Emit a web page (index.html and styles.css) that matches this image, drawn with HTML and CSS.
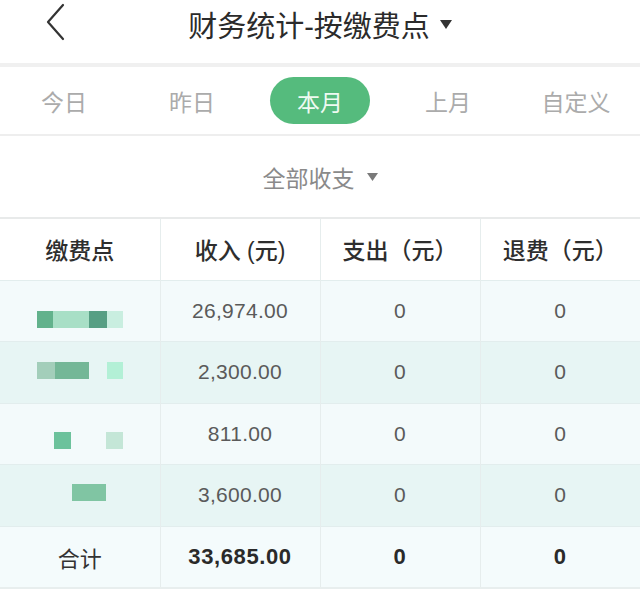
FILE: index.html
```html
<!DOCTYPE html>
<html lang="zh">
<head>
<meta charset="utf-8">
<link rel="stylesheet" href="styles.css">
</head>
<body>
<div class="page">
  <header class="topbar">
    <div class="back">
      <svg width="22" height="38" viewBox="0 0 22 38"><path d="M18 2 L3 19 L18 36" fill="none" stroke="#333" stroke-width="2.2" stroke-linecap="round" stroke-linejoin="round"/></svg>
    </div>
    <h1 class="title">财务统计-按缴费点<svg class="caret" width="12" height="9" viewBox="0 0 12 9"><path d="M0 0 H12 L6 9 Z" fill="#333"/></svg></h1>
    <div></div>
  </header>
  <nav class="tabs">
    <div class="tab">今日</div>
    <div class="tab">昨日</div>
    <div class="tab"><span class="pill">本月</span></div>
    <div class="tab">上月</div>
    <div class="tab">自定义</div>
  </nav>
  <div class="filter">全部收支<svg class="caret small" width="11" height="8" viewBox="0 0 11 8"><path d="M0 0 H11 L5.5 8 Z" fill="#7a7a7a"/></svg></div>
  <table class="grid">
    <thead>
      <tr><th>缴费点</th><th>收入 (元)</th><th>支出（元）</th><th>退费（元）</th></tr>
    </thead>
    <tbody>
      <tr class="light">
        <td class="name"><div class="mosaic r1"><i class="w16 c1"></i><i class="w36 c2"></i><i class="w18 c3"></i><i class="w16 c4"></i></div></td>
        <td>26,974.00</td><td>0</td><td>0</td>
      </tr>
      <tr class="dark">
        <td class="name"><div class="mosaic r2"><i class="w18 c5"></i><i class="w34 c6"></i><i class="w18"></i><i class="w16 c7"></i></div></td>
        <td>2,300.00</td><td>0</td><td>0</td>
      </tr>
      <tr class="light">
        <td class="name"><div class="mosaic r3"><i class="w17"></i><i class="w17 c8"></i><i class="w35"></i><i class="w17 c9"></i></div></td>
        <td>811.00</td><td>0</td><td>0</td>
      </tr>
      <tr class="dark">
        <td class="name"><div class="mosaic r4"><i class="w35"></i><i class="w34 c10"></i></div></td>
        <td>3,600.00</td><td>0</td><td>0</td>
      </tr>
      <tr class="total">
        <td class="label">合计</td><td>33,685.00</td><td>0</td><td>0</td>
      </tr>
    </tbody>
  </table>
</div>
</body>
</html>
```

FILE: styles.css
```css
* { box-sizing: border-box; }
html, body { margin: 0; padding: 0; background: #fff; }
body {
  font-family: "Liberation Sans", "Noto Sans CJK SC", sans-serif;
  color: #333;
}
.page { width: 640px; }

.topbar {
  height: 63px;
  display: grid;
  grid-template-columns: 1fr auto 1fr;
  align-items: center;
}
.back { padding-left: 45px; display: flex; align-items: center; height: 63px; }
.back svg { display: block; margin-top: -20px; }
.title {
  margin: 0;
  font-size: 29px;
  font-weight: 400;
  color: #2b2b2b;
  display: flex;
  align-items: center;
  margin-top: -15px;
}
.caret { display: block; margin-left: 10px; }
.caret.small { margin-left: 12px; }

.tabs {
  height: 73px;
  border-top: 4px solid #f0f0f0;
  border-bottom: 2px solid #eeeeee;
  display: grid;
  grid-template-columns: repeat(5, 1fr);
  align-items: center;
}
.tab {
  text-align: center;
  font-size: 23px;
  color: #ababab;
  display: flex;
  justify-content: center;
  align-items: center;
}
.pill {
  width: 100px;
  height: 47px;
  border-radius: 24px;
  background: #55bb7d;
  color: #eefaf2;
  display: flex;
  align-items: center;
  justify-content: center;
}

.filter {
  height: 81px;
  display: flex;
  align-items: center;
  justify-content: center;
  font-size: 23px;
  color: #8a8a8a;
}

.grid {
  width: 640px;
  border-collapse: collapse;
  table-layout: fixed;
  border-top: 2px solid #e8eaea;
  border-bottom: 2px solid #e8eeee;
}
.grid th, .grid td {
  width: 160px;
  text-align: center;
  border-left: 1px solid #e6eded;
  padding: 0;
}
.grid th:first-child, .grid td:first-child { border-left: none; }
.grid th {
  height: 62px;
  font-size: 23px;
  font-weight: 500;
  color: #2e2e2e;
  background: #fff;
}
.grid td {
  height: 61.5px;
  font-size: 21px;
  letter-spacing: 0.3px;
  color: #5a5a5a;
  border-top: 1px solid #e2eded;
}
.light td { background: #f3fafb; }
.dark td { background: #e7f5f4; }
.total td {
  background: #f4fbfc;
  font-weight: 700;
  font-size: 22px;
  letter-spacing: 0.6px;
  color: #2a2a2a;
}
.total td.label { font-weight: 400; color: #333; letter-spacing: 0; }

.grid td.name { vertical-align: top; }
.mosaic { display: flex; padding-left: 37px; height: 17px; }
.mosaic i { display: block; height: 17px; }
.r1 { margin-top: 30px; }
.r2 { margin-top: 20px; }
.r3 { margin-top: 28px; }
.r4 { margin-top: 19px; }
.w16 { width: 16px; } .w17 { width: 17px; } .w18 { width: 18px; }
.w34 { width: 34px; } .w35 { width: 35px; } .w36 { width: 36px; }
.c1 { background: #62b28c; }
.c2 { background: #a8dfc6; }
.c3 { background: #579f84; }
.c4 { background: #c9eee0; }
.c5 { background: #a3ceba; }
.c6 { background: #74b797; }
.c7 { background: #b3f0d6; }
.c8 { background: #6cc29c; }
.c9 { background: #c4e6d7; }
.c10 { background: #80c5a3; }
```
